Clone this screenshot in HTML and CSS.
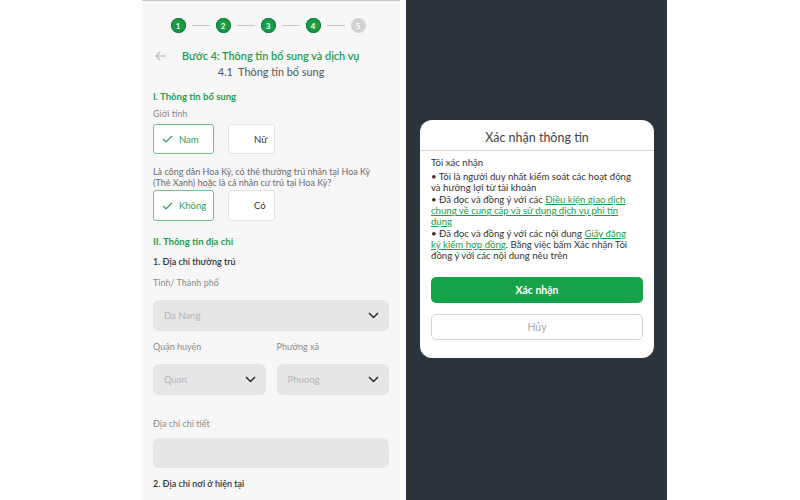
FILE: index.html
```html
<!DOCTYPE html>
<html lang="vi">
<head>
    <meta charset="UTF-8">
    <title>Xác nhận thông tin</title>
    <link rel="stylesheet" href="styles.css">
</head>
<body>
    <div class="page">
        <div class="spacer"></div>

        <div class="phone form">
            <div class="stepper">
                <span class="step done">1</span><span class="line"></span>
                <span class="step done">2</span><span class="line"></span>
                <span class="step done">3</span><span class="line"></span>
                <span class="step done">4</span><span class="line"></span>
                <span class="step">5</span>
            </div>

            <div class="header">
                <svg class="back" width="12" height="10" viewBox="0 0 12 10">
                    <path d="M11 5H1.5M5 1L1 5l4 4" fill="none" stroke="#b5b5b5" stroke-width="1.1"/>
                </svg>
                <div class="title">Bước 4: Thông tin bổ sung và dịch vụ</div>
            </div>
            <div class="subtitle">4.1&nbsp;&nbsp;Thông tin bổ sung</div>

            <div class="section">I. Thông tin bổ sung</div>
            <div class="label gender">Giới tính</div>
            <div class="choices">
                <div class="choice wide selected">
                    <svg class="check" width="11" height="8" viewBox="0 0 11 8"><path d="M1 4l3 3 6-6" fill="none" stroke="#2aa05a" stroke-width="1.2"/></svg>
                    Nam
                </div>
                <div class="choice narrow"><span class="check"></span>Nữ</div>
            </div>

            <div class="question">Là công dân Hoa Kỳ, có thẻ thường trú nhân tại Hoa Kỳ (Thẻ Xanh) hoặc là cá nhân cư trú tại Hoa Kỳ?</div>
            <div class="choices second">
                <div class="choice wide selected">
                    <svg class="check" width="11" height="8" viewBox="0 0 11 8"><path d="M1 4l3 3 6-6" fill="none" stroke="#2aa05a" stroke-width="1.2"/></svg>
                    Không
                </div>
                <div class="choice narrow"><span class="check"></span>Có</div>
            </div>

            <div class="section address">II. Thông tin địa chỉ</div>
            <div class="sub">1. Địa chỉ thường trú</div>
            <div class="label city">Tỉnh/ Thành phố</div>
            <div class="select full">
                <span>Da Nang</span>
                <svg width="11" height="7" viewBox="0 0 11 7"><path d="M1 1l4.5 4.5L10 1" fill="none" stroke="#2a2a2a" stroke-width="1.5"/></svg>
            </div>

            <div class="row labels">
                <div class="label">Quận huyện</div>
                <div class="label">Phường xã</div>
            </div>
            <div class="row selects">
                <div class="select">
                    <span>Quan</span>
                    <svg width="11" height="7" viewBox="0 0 11 7"><path d="M1 1l4.5 4.5L10 1" fill="none" stroke="#2a2a2a" stroke-width="1.5"/></svg>
                </div>
                <div class="select">
                    <span>Phuong</span>
                    <svg width="11" height="7" viewBox="0 0 11 7"><path d="M1 1l4.5 4.5L10 1" fill="none" stroke="#2a2a2a" stroke-width="1.5"/></svg>
                </div>
            </div>

            <div class="label detail">Địa chỉ chi tiết</div>
            <div class="input"></div>
            <div class="sub current">2. Địa chỉ nơi ở hiện tại</div>
        </div>

        <div class="gap"></div>

        <div class="phone dark">
            <div class="modal">
                <div class="modal-title">Xác nhận thông tin</div>
                <div class="modal-body">
                    <p class="intro">Tôi xác nhận</p>
                    <p>• Tôi là người duy nhất kiểm soát các hoạt động<br>và hưởng lợi từ tài khoản</p>
                    <p>• Đã đọc và đồng ý với các <a href="#">Điều kiện giao dịch<br>chung về cung cấp và sử dụng dịch vụ phi tín<br>dụng</a></p>
                    <p>• Đã đọc và đồng ý với các nội dung <a href="#">Giấy đăng<br>ký kiểm hợp đồng</a>. Bằng việc bấm Xác nhận Tôi<br>đồng ý với các nội dung nêu trên</p>
                </div>
                <div class="actions">
                    <button class="confirm">Xác nhận</button>
                    <button class="cancel">Hủy</button>
                </div>
            </div>
        </div>
    </div>
</body>
</html>
```

FILE: styles.css
```css
* {
    margin: 0;
    padding: 0;
    box-sizing: border-box;
    font-family: Lato, "Noto Sans", sans-serif;
}

body {
    background: #fff;
    width: 800px;
    height: 500px;
    overflow: hidden;
}

.page {
    display: flex;
    height: 500px;
}

.spacer {
    width: 142px;
}

.gap {
    width: 6px;
}

.phone {
    height: 500px;
}

/* left: form screen */

.form {
    width: 258px;
    background: #f7f7f7;
    border-top: 1px solid #c9c9c9;
    padding: 0 11px;
}

.stepper {
    display: flex;
    align-items: center;
    justify-content: center;
    margin-top: 17px;
    height: 15px;
    padding-right: 6px;
}

.step {
    width: 15px;
    height: 15px;
    border-radius: 50%;
    background: #d2d2d2;
    color: #fff;
    font-size: 8px;
    font-weight: 700;
    display: flex;
    align-items: center;
    justify-content: center;
}

.step.done {
    background: #179c45;
    box-shadow: 0 0 0 1px #0f7f35 inset;
}

.line {
    width: 18px;
    height: 1px;
    background: #c4c4c4;
    margin: 0 6px;
}

.header {
    display: flex;
    align-items: center;
    margin-top: 16px;
    height: 14px;
}

.back {
    margin-left: 2px;
    margin-right: 15px;
}

.title {
    color: #1c9b4b;
    font-size: 10.9px;
    font-weight: 600;
    line-height: 14px;
    white-space: nowrap;
}

.subtitle {
    margin-top: 2px;
    text-align: center;
    color: #555;
    font-size: 10.9px;
    line-height: 14px;
}

.section {
    margin-top: 11px;
    color: #1f9e50;
    font-size: 9.5px;
    font-weight: 700;
    line-height: 14px;
}

.label {
    color: #8a8a8a;
    font-size: 9px;
    line-height: 14px;
}

.gender {
    margin-top: 3px;
}

.choices {
    display: flex;
    gap: 14px;
    margin-top: 3px;
}

.choice {
    height: 30px;
    border: 1px solid #e3e3e3;
    border-radius: 3px;
    background: #fff;
    display: flex;
    align-items: center;
    padding-left: 8px;
    color: #333;
    font-size: 9.5px;
}

.choice.wide {
    width: 61px;
}

.choice.narrow {
    width: 47px;
}

.choice.selected {
    border-color: #6fc28f;
    color: #27a05a;
}

.check {
    display: block;
    width: 11px;
    margin-right: 6px;
}

.question {
    margin-top: 12px;
    color: #6a6a6a;
    font-size: 9px;
    line-height: 11px;
    padding-right: 10px;
}

.choices.second {
    margin-top: 2px;
}

.choices.second .choice {
    height: 31px;
}

.section.address {
    margin-top: 14px;
}

.sub {
    margin-top: 6px;
    color: #333;
    font-size: 9px;
    font-weight: 600;
    line-height: 14px;
}

.city {
    margin-top: 7px;
}

.select {
    height: 31px;
    background: #e6e6e6;
    border-radius: 6px;
    display: flex;
    align-items: center;
    justify-content: space-between;
    padding: 0 10px 0 11px;
    color: #b3b3b3;
    font-size: 9.5px;
}

.select.full {
    margin-top: 10px;
}

.row {
    display: grid;
    grid-template-columns: 1fr 1fr;
    column-gap: 11px;
}

.row.labels {
    margin-top: 9px;
}

.row.selects {
    margin-top: 10px;
}

.detail {
    margin-top: 22px;
}

.input {
    margin-top: 7px;
    height: 30px;
    background: #e6e6e6;
    border-radius: 6px;
}

.sub.current {
    margin-top: 9px;
}

/* right: confirm dialog */

.dark {
    width: 261px;
    background: #2b333b;
    padding-top: 120px;
    padding-left: 14px;
}

.modal {
    width: 234px;
    height: 238px;
    background: #fff;
    border-radius: 12px;
}

.modal-title {
    height: 31px;
    border-bottom: 1px solid #d8d8d8;
    text-align: center;
    color: #444;
    font-size: 12.5px;
    line-height: 36px;
}

.modal-body {
    padding: 6px 11px 0;
    color: #333;
    font-size: 9.6px;
    line-height: 11px;
}

.modal-body p {
    margin-top: 1px;
    white-space: nowrap;
}

.modal-body .intro {
    margin-top: 0;
    margin-bottom: 3px;
}

.modal-body a {
    color: #1c9b4b;
}

.actions {
    padding: 16px 11px 0;
    display: flex;
    flex-direction: column;
    gap: 11px;
}

.actions button {
    height: 26px;
    border-radius: 5px;
    font-family: Lato, "Noto Sans", sans-serif;
    font-size: 10.5px;
    cursor: pointer;
}

.confirm {
    background: #17a34a;
    border: none;
    color: #fff;
    font-weight: 700;
}

.cancel {
    background: #fff;
    border: 1px solid #d6d6d6;
    color: #a8a8a8;
}
```
